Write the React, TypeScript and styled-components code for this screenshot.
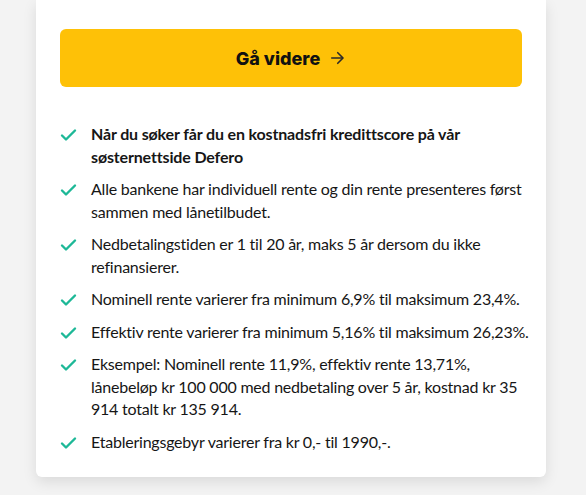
import React from "react";
import styled, { createGlobalStyle } from "styled-components";

const Global = createGlobalStyle`
  html, body { margin: 0; padding: 0; background: #f3f3f3; }
  body { font-family: "Lato", "Liberation Sans", sans-serif; }
`;

const Page = styled.div`
  padding: 0 40px 20px 36px;
`;

const Card = styled.div`
  background: #fff;
  border-radius: 0 0 6px 6px;
  box-shadow: 0 5px 14px rgba(0, 0, 0, 0.1);
  padding: 29px 24px 24px;
`;

const Button = styled.button`
  width: 100%;
  height: 58px;
  border: none;
  border-radius: 6px;
  background: #fec107;
  color: #111;
  font-family: "Inter", "DejaVu Sans", sans-serif;
  font-weight: 800;
  font-size: 18px;
  display: flex;
  align-items: center;
  justify-content: center;
  gap: 8px;
  cursor: pointer;
`;

const List = styled.ul`
  list-style: none;
  margin: 36px -14px 0 0;
  padding: 0;
  display: flex;
  flex-direction: column;
  gap: 10px;
`;

const Item = styled.li<{ $bold?: boolean }>`
  display: flex;
  align-items: flex-start;
  gap: 14px;
  font-size: 16px;
  line-height: 22.5px;
  letter-spacing: ${(p) => (p.$bold ? "-0.15px" : "-0.22px")};
  color: #161616;
  font-weight: ${(p) => (p.$bold ? 700 : 400)};
`;

const Check = styled.svg`
  flex: none;
  width: 17px;
  height: 14px;
  margin-top: 5px;
`;

const CheckIcon = () => (
  <Check viewBox="0 0 17 14">
    <polyline
      points="2,7.5 6,11.5 15,2.5"
      fill="none"
      stroke="#1db897"
      strokeWidth="2.4"
      strokeLinecap="round"
      strokeLinejoin="round"
    />
  </Check>
);

const Arrow = () => (
  <svg width="18" height="18" viewBox="0 0 24 24" fill="none" stroke="#2a2a2a" strokeWidth="2.2" strokeLinecap="round" strokeLinejoin="round">
    <path d="M5 12h14" />
    <path d="M13 5l7 7-7 7" />
  </svg>
);

const items: { text: string; bold?: boolean }[] = [
  { text: "Når du søker får du en kostnadsfri kredittscore på vår søsternettside Defero", bold: true },
  { text: "Alle bankene har individuell rente og din rente presenteres først sammen med lånetilbudet." },
  { text: "Nedbetalingstiden er 1 til 20 år, maks 5 år dersom du ikke refinansierer." },
  { text: "Nominell rente varierer fra minimum 6,9% til maksimum 23,4%." },
  { text: "Effektiv rente varierer fra minimum 5,16% til maksimum 26,23%." },
  { text: "Eksempel: Nominell rente 11,9%, effektiv rente 13,71%, lånebeløp kr 100 000 med nedbetaling over 5 år, kostnad kr 35 914 totalt kr 135 914." },
  { text: "Etableringsgebyr varierer fra kr 0,- til 1990,-." },
];

export default function App() {
  return (
    <>
      <Global />
      <Page>
        <Card>
          <Button>
            Gå videre <Arrow />
          </Button>
          <List>
            {items.map((it, i) => (
              <Item key={i} $bold={it.bold}>
                <CheckIcon />
                <span>{it.text}</span>
              </Item>
            ))}
          </List>
        </Card>
      </Page>
    </>
  );
}
